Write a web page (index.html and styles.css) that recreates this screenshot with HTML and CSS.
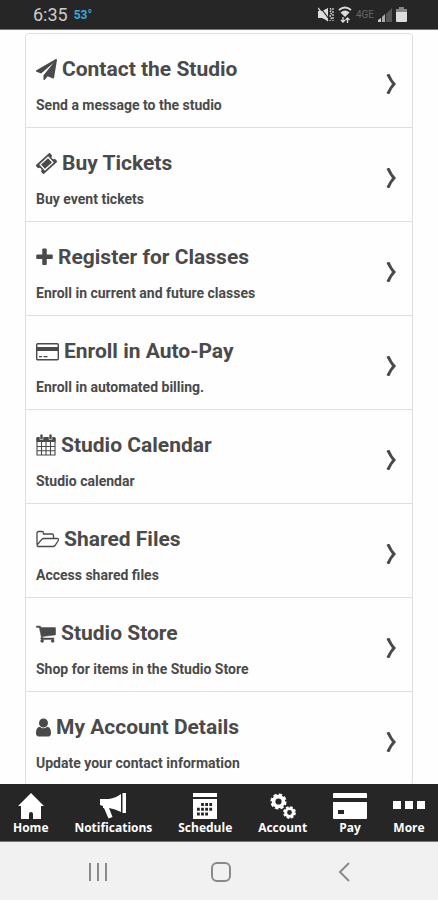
FILE: index.html
```html
<!DOCTYPE html>
<html lang="en">
<head>
<meta charset="utf-8">
<meta name="viewport" content="width=device-width, initial-scale=1">
<title>Studio</title>
<link rel="stylesheet" href="styles.css">
</head>
<body>
<svg class="defs" aria-hidden="true">
  <symbol id="chevron" viewBox="0 0 12 20"><path d="M1.500 1l1.500-1h1.500Q7 6 11 10Q7 14 4.500 20H3l-1.500-1Q4 14 7 10Q4 6 1.500 1z"/></symbol>
</svg>

<header class="status">
  <span class="time">6:35</span>
  <span class="temp">53°</span>
  <span class="status-icons">
    <svg width="16" height="16" viewBox="0 0 16 16"><path d="M0 4h4l6-3v13l-6-3H0z"/><path d="M2 0l9 12" stroke="#262626" stroke-width="1.200"/><path d="M0 1l10 13" fill="none" stroke="#ddd" stroke-width="1.300"/><path d="M12 1l1.500 2L12 5l1.500 2L12 9l1.500 2-1.500 3M15 1v13" fill="none" stroke="#ddd" stroke-width="1.200" stroke-dasharray="2 1"/></svg>
    <svg fill="none" width="14" height="18" viewBox="0 0 14 18" stroke="#ddd" stroke-width="1.800"><path d="M1 4q6-5 12 0"/><path d="M2.500 6.500q4.500-4 9 0L7 11z" fill="#ddd" stroke="none"/><path d="M5 11v5M3 14l2 2 2-2M9.500 17v-5M7.500 14l2-2 2 2" stroke-width="1.300"/></svg>
    <span class="network">4GE</span>
    <svg width="14" height="14" viewBox="0 0 14 14"><path d="M0 14v-2l3-2v4z" fill="#ccc"/><path d="M4 14V9l3-3v8z" fill="#aaa"/><path d="M8 14V6l6-6v14z" fill="#555"/></svg>
    <svg width="11" height="15" viewBox="0 0 11 15"><path d="M3 0h5v2h3v4H0V2h3z" fill="#888"/><path d="M0 5h11v9q0 1-1 1H1q-1 0-1-1z"/></svg>
  </span>
</header>

<main class="content">
  <nav class="menu" aria-label="Studio menu">
    <a class="item" href="#contact">
      <span class="text"><span class="title"><svg width="21" height="21" viewBox="0 0 1792 1792"><path d="M1764 11q33 24 27 64l-256 1536q-5 29-32 45-14 8-31 8-11 0-24-5l-453-185-242 295q-18 23-49 23-13 0-22-4-19-7-30.500-23.500t-11.500-36.500v-349l864-1059-1069 925-395-162q-37-14-40-55-2-40 32-59l1664-960q15-9 32-9 20 0 36 11z"/></svg>Contact the Studio</span><span class="note">Send a message to the studio</span></span>
      <svg class="chevron"><use href="#chevron"/></svg>
    </a>
    <a class="item" href="#tickets">
      <span class="text"><span class="title"><svg width="21" height="21" viewBox="0 0 21 21"><g transform="rotate(-42 10.500 10.500)"><path fill-rule="evenodd" d="M1 4.500h19v4a2 2 0 0 0 0 4v4H1v-4a2 2 0 0 0 0-4zM4.500 6.300v8.400h12V6.300z"/><path d="M5.800 7.600h9.400v5.800H5.800z"/></g></svg>Buy Tickets</span><span class="note">Buy event tickets</span></span>
      <svg class="chevron"><use href="#chevron"/></svg>
    </a>
    <a class="item" href="#register">
      <span class="text"><span class="title"><svg width="17" height="21" viewBox="192 0 1408 1792"><path d="M1600 736v192q0 40-28 68t-68 28h-416v416q0 40-28 68t-68 28h-192q-40 0-68-28t-28-68v-416h-416q-40 0-68-28t-28-68v-192q0-40 28-68t68-28h416v-416q0-40 28-68t68-28h192q40 0 68 28t28 68v416h416q40 0 68 28t28 68z"/></svg>Register for Classes</span><span class="note">Enroll in current and future classes</span></span>
      <svg class="chevron"><use href="#chevron"/></svg>
    </a>
    <a class="item" href="#autopay">
      <span class="text"><span class="title"><svg width="23" height="21" viewBox="0 0 23 21"><rect x=".7" y="2.700" width="21.600" height="16" rx="1" fill="none" stroke="currentColor" stroke-width="1.400"/><path d="M1 6h21v4H1zM3 15h3v1.300H3zM7.500 15h4v1.300h-4z"/></svg>Enroll in Auto-Pay</span><span class="note">Enroll in automated billing.</span></span>
      <svg class="chevron"><use href="#chevron"/></svg>
    </a>
    <a class="item" href="#calendar">
      <span class="text"><span class="title"><svg width="20" height="22" viewBox="0 0 20 22"><path d="M1.500 3h17q1 0 1 1v4H.5V4q0-1 1-1z"/><path d="M1 4v17h18V4M1 12.500h18M1 16.800h18M5.500 8v13M10 8v13M14.500 8v13" fill="none" stroke="currentColor" stroke-width="1.100"/><path d="M4 1.500q0-1.500 1.500-1.500T7 1.500v4H4zM13 1.500q0-1.500 1.500-1.500T16 1.500v4h-3z" stroke="#fff" stroke-width=".6"/></svg>Studio Calendar</span><span class="note">Studio calendar</span></span>
      <svg class="chevron"><use href="#chevron"/></svg>
    </a>
    <a class="item" href="#files">
      <span class="text"><span class="title"><svg width="23" height="21" viewBox="0 0 23 21"><path d="M1 15.500V4q0-1.500 1.500-1.500H6Q7.500 2.500 7.500 4v1h8.500q1.500 0 1.500 1.500V9M2.500 17.500H17q1.200 0 2-1l3-4.500Q23.500 9.500 21 9.500H8q-1.500 0-2.500 1.200L1.500 15.500Q.5 17.500 2.500 17.500z" fill="none" stroke="currentColor" stroke-width="1.300"/></svg>Shared Files</span><span class="note">Access shared files</span></span>
      <svg class="chevron"><use href="#chevron"/></svg>
    </a>
    <a class="item" href="#store">
      <span class="text"><span class="title"><svg width="20" height="21" viewBox="64 0 1680 1792"><path d="M704 1536q0 52-38 90t-90 38-90-38-38-90 38-90 90-38 90 38 38 90zm896 0q0 52-38 90t-90 38-90-38-38-90 38-90 90-38 90 38 38 90zm128-1088v512q0 24-16.500 42.500t-40.500 21.500l-1044 122q13 60 13 70 0 16-24 64h920q26 0 45 19t19 45-19 45-45 19h-1024q-26 0-45-19t-19-45q0-11 8-31.500t16-36 21.500-40 15.500-29.500l-177-823h-204q-26 0-45-19t-19-45 19-45 45-19h256q16 0 28.500 6.500t19.500 15.500 13 24.500 8 26 5.500 29.500 4.500 26h1201q26 0 45 19t19 45z" stroke="currentColor" stroke-width="40"/></svg>Studio Store</span><span class="note">Shop for items in the Studio Store</span></span>
      <svg class="chevron"><use href="#chevron"/></svg>
    </a>
    <a class="item" href="#details">
      <span class="text"><span class="title"><svg width="15" height="21" viewBox="256 0 1280 1792"><path d="M1536 1399q0 109-62.500 187t-150.500 78h-854q-88 0-150.500-78t-62.500-187q0-85 8.500-160.500t31.500-152 58.500-131 94-89 134.500-34.500q131 128 313 128t313-128q76 0 134.500 34.500t94 89 58.500 131 31.500 152 8.500 160.500zm-256-887q0 159-112.500 271.500t-271.500 112.500-271.500-112.500-112.500-271.500 112.500-271.500 271.500-112.500 271.500 112.500 112.500 271.500z"/></svg>My Account Details</span><span class="note">Update your contact information</span></span>
      <svg class="chevron"><use href="#chevron"/></svg>
    </a>
  </nav>
</main>

<nav class="tabs" aria-label="Main">
  <a class="tab" href="#home"><svg width="26" height="26" viewBox="0 0 26 26"><path d="M13 0l13 13h-3v13h-8v-5q0-2-2-2t-2 2v5H3V13H0z"/></svg>Home</a>
  <a class="tab" href="#notifications"><svg width="28" height="26" viewBox="0 0 28 26"><path d="M1 6h9q7-1 12-5v18q-6-3-12-4l3.500 9-4 1.500L5 15H4v-2L1 12zM23.500 0H27v20h-3.500z"/></svg>Notifications</a>
  <a class="tab" href="#schedule"><svg width="24" height="26" viewBox="0 0 24 26"><path d="M0 0h24v4H0zM0 6h24v20H0z"/><path d="M8.100 11.500H20M4 16.200h16M4 21h12" fill="none" stroke="#262626" stroke-width="3" stroke-dasharray="2.800 1.300"/></svg>Schedule</a>
  <a class="tab" href="#account"><svg fill="none" width="26" height="26" viewBox="0 0 26 26" stroke="#fff"><circle cx="8.500" cy="8.500" r="4.900" stroke-width="3.600"/><circle cx="8.500" cy="8.500" r="7" stroke-width="2.200" stroke-dasharray="3.500 1.998"/><circle cx="19.500" cy="19.500" r="3.800" stroke-width="2.800"/><circle cx="19.500" cy="19.500" r="5.500" stroke-width="1.800" stroke-dasharray="2.600 1.720"/></svg>Account</a>
  <a class="tab" href="#pay"><svg width="34" height="26" viewBox="0 0 34 26"><path d="M0 1q0-1 1-1h32q1 0 1 1v4H0zM0 9h34v16q0 1-1 1H1q-1 0-1-1z"/><path d="M5 17h6v4H5z" fill="#262626"/></svg>Pay</a>
  <a class="tab" href="#more"><svg width="32" height="26" viewBox="0 0 32 26"><path d="M0 8h8v8H0zM12 8h8v8h-8zM24 8h8v8h-8z"/></svg>More</a>
</nav>

<footer class="system">
  <button type="button" aria-label="Recent apps"><svg width="20" height="20" viewBox="0 0 20 20"><path d="M2 1v18M10 1v18M18 1v18"/></svg></button>
  <button type="button" aria-label="Home screen"><svg width="20" height="20" viewBox="0 0 20 20"><rect x="1" y="1" width="18" height="18" rx="5"/></svg></button>
  <button type="button" aria-label="Back"><svg width="20" height="20" viewBox="0 0 20 20"><path d="M15 1L6 10l9 9"/></svg></button>
</footer>
</body>
</html>
```
FILE: styles.css
```css
* { box-sizing: border-box; }

body {
  margin: 0;
  height: 100vh;
  display: flex;
  flex-direction: column;
  background: #fefefe;
  color: #4a4a4a;
  font-family: Roboto, "Liberation Sans", sans-serif;
}

a { color: inherit; text-decoration: none; }
svg { display: block; flex: none; fill: currentColor; }
svg[fill="none"] { fill: none; }
.defs { position: absolute; width: 0; height: 0; }

.status {
  flex: none;
  display: flex;
  align-items: center;
  height: 30px;
  padding: 0 31px 0 33px;
  background: #262626;
  border-bottom: 1px solid #777;
}
.time { color: #ccc; font-size: 18px; line-height: 28px; }
.temp { margin-left: 6px; color: #3aa8d8; font-size: 12px; font-weight: 700; }
.status-icons { display: flex; align-items: center; gap: 4px; margin-left: auto; color: #ddd; }
.network { color: #666; font-size: 10px; line-height: 16px; }

.content { flex: 1; min-height: 0; overflow: hidden; padding: 3px 25px 0; }
.menu { border: 1px solid #e0e0e0; border-radius: 4px; }
.item {
  display: flex;
  align-items: center;
  justify-content: space-between;
  padding: 21px 15px 13px 10px;
  border-bottom: 1px solid #e0e0e0;
}
.item:last-child { border-bottom: 0; }
.text { display: flex; flex-direction: column; gap: 13px; }
.title { display: flex; align-items: center; gap: 5px; font-size: 21px; font-weight: 700; line-height: 28px; }
.note { font-size: 14px; font-weight: 700; line-height: 18px; }
.chevron { width: 12px; height: 20px; margin-bottom: 2px; }

.tabs {
  flex: none;
  display: flex;
  justify-content: space-between;
  padding: 9px 13px 5px;
  background: #262626;
  border-bottom: 1px solid #777;
  color: #fff;
  font-family: "Open Sans", "Noto Sans", sans-serif;
  font-size: 12px;
  font-weight: 700;
  line-height: 16px;
}
.tab { display: flex; flex-direction: column; align-items: center; gap: 1px; }

.system {
  flex: none;
  display: flex;
  justify-content: space-around;
  padding: 0 33px 0 36px;
  background: #f1f1f1;
}
.system button { padding: 20px 19px 18px; border: 0; background: none; color: #8a8a8a; }
.system svg { fill: none; stroke: currentColor; stroke-width: 2; }
```
